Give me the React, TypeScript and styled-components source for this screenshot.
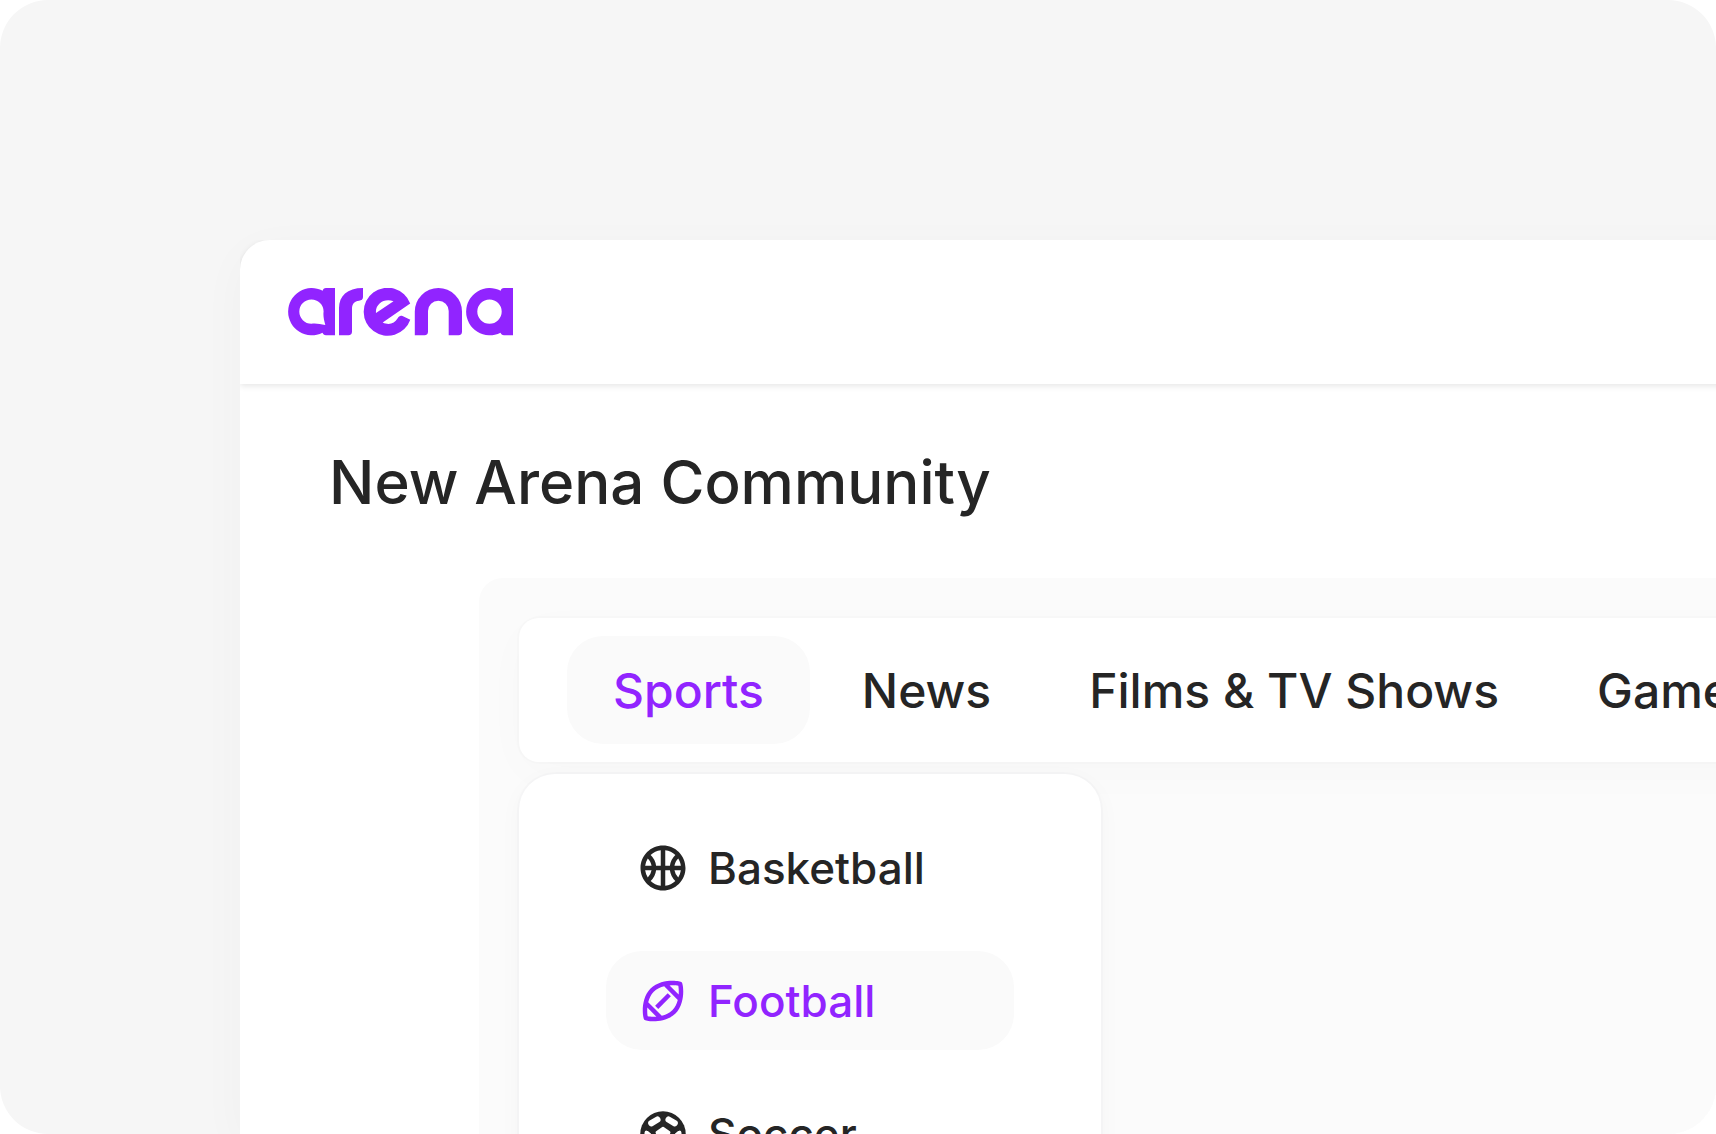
import React from "react";
import styled, { createGlobalStyle } from "styled-components";
import { MdOutlineSportsBasketball, MdOutlineSportsFootball } from "react-icons/md";

const color = {
  accent: "#9124ff",
  text: "#252525",
  canvas: "#f6f6f6",
  panel: "#fbfbfb",
  subtle: "#fafafa",
  white: "#ffffff",
};

const GlobalStyle = createGlobalStyle`
  *, *::before, *::after { box-sizing: border-box; }
  html, body, #root { height: 100%; }
  body {
    margin: 0;
    overflow: hidden;
    background: ${color.white};
    color: ${color.text};
    font-family: Inter, "Liberation Sans", sans-serif;
  }
`;

const Canvas = styled.div`
  display: flex;
  height: 100%;
  padding: 240px 0 0 240px;
  overflow: hidden;
  border-radius: 48px;
  background: ${color.canvas};
`;

const Window = styled.div`
  flex: 1;
  display: flex;
  flex-direction: column;
  min-width: 0;
  margin-right: -60px;
  border-radius: 30px 0 0 0;
  background: ${color.white};
  box-shadow: 0 12px 48px rgba(0, 0, 0, 0.03);
`;

const Header = styled.header`
  display: flex;
  flex: none;
  align-items: center;
  height: 144px;
  padding: 0 48px;
  border-radius: 30px 0 0 0;
  box-shadow: 0 2px 6px rgba(0, 0, 0, 0.1);
  clip-path: inset(0 0 -12px 0);
`;

const HomeLink = styled.a`
  display: flex;
  color: ${color.accent};
`;

const Main = styled.main`
  flex: 1;
  display: flex;
  flex-direction: column;
  min-height: 0;
`;

const Title = styled.h1`
  flex: none;
  margin: 60px 0 58px;
  padding-left: 89px;
  font-size: 60px;
  line-height: 76px;
  font-weight: 500;
  white-space: nowrap;
`;

const Panel = styled.section`
  flex: 1;
  display: flex;
  flex-direction: column;
  align-items: stretch;
  gap: 12px;
  min-height: 0;
  margin-left: 239px;
  padding: 40px 0 0 40px;
  overflow: hidden;
  border-radius: 24px 0 0 0;
  background: ${color.panel};
`;

const TabBar = styled.nav`
  display: flex;
  flex: none;
  align-items: center;
  gap: 6px;
  height: 144px;
  padding-left: 48px;
  border-radius: 20px 0 0 20px;
  background: ${color.white};
  box-shadow: 0 0 0 2px rgba(0, 0, 0, 0.01), 0 12px 48px rgba(0, 0, 0, 0.02);
`;

const Tab = styled.button<{ $active?: boolean }>`
  flex: none;
  height: 108px;
  padding: 0 46px;
  border: 0;
  border-radius: 36px;
  background: ${(p) => (p.$active ? color.subtle : "transparent")};
  color: ${(p) => (p.$active ? color.accent : color.text)};
  font: inherit;
  font-size: 48px;
  font-weight: 500;
  white-space: nowrap;
  cursor: pointer;
`;

const Menu = styled.ul`
  display: flex;
  flex: none;
  flex-direction: column;
  gap: 34px;
  width: 582px;
  margin: 0;
  padding: 44px 87px;
  list-style: none;
  border-radius: 36px;
  background: ${color.white};
  box-shadow: 0 0 0 2px rgba(0, 20, 40, 0.015), 0 6px 24px rgba(0, 0, 0, 0.03);
`;

const MenuItem = styled.button<{ $active?: boolean }>`
  display: flex;
  align-items: center;
  gap: 18px;
  width: 100%;
  height: 99px;
  padding: 0 30px;
  border: 0;
  border-radius: 36px;
  background: ${(p) => (p.$active ? color.subtle : "transparent")};
  color: ${(p) => (p.$active ? color.accent : color.text)};
  font: inherit;
  font-size: 44px;
  font-weight: 500;
  cursor: pointer;

  svg {
    flex: none;
    width: 54px;
    height: 54px;
  }
`;

const ArenaLogo = () => (
  <svg width="226" height="48" viewBox="0 0 226 48" fill="currentColor" fillRule="evenodd" aria-hidden="true">
    <path d="M34.7 2.8C35.2 1 36 0 38 0H47V47.2H38C36 47.2 35.2 46.2 34.5 44.7A23.6 23.6 0 1 1 34.7 2.8ZM23.4 11.5A12.1 12.1 0 1 0 23.4 35.7C28 35 32 36 37.3 37C36 32 35 28 35.6 23.6A12.1 12.1 0 0 0 23.4 11.5Z" />
    <path d="M51 47.2V20C51 8 59 0 75 0V9C75 11.4 73.5 12.5 71 12.7C66.5 13 64 16 64 20.5V43.5C64 46 62.7 47.2 60.5 47.2Z" />
    <path d="M122.2 15.4L94.7 34.5C101 37.5 106.5 35.5 109.5 30.5C111 28 112.5 27.2 114.5 28.1L122.3 31.8A24 24 0 1 1 122.2 15.4ZM88 25L105.5 13.3C97 9.5 87 15.5 88 25Z" />
    <path d="M126.8 47.2V23.6A23.6 23.6 0 0 1 174 23.6V43.5C174 46 172.8 47.2 170.5 47.2H160.7V23A10.35 10.35 0 0 0 140 23V43.5C140 46 138.8 47.2 136.5 47.2Z" />
    <path d="M212.7 2.8C213.2 1 214 0 216 0H225V47.2H216C214 47.2 213.2 46.2 212.5 44.7A23.6 23.6 0 1 1 212.7 2.8ZM201.5 11.4A12.2 12.2 0 1 0 201.5 35.8A12.2 12.2 0 1 0 201.5 11.4Z" />
  </svg>
);

const SoccerIcon = () => (
  <svg viewBox="0 0 24 24" aria-hidden="true">
    <mask id="soccer-panels">
      <rect width="24" height="24" fill="#fff" />
      <g fill="#000" stroke="#000" strokeLinejoin="round" strokeLinecap="round">
        <path d="M12 9.4L14.7 11.3L13.7 14.5H10.3L9.3 11.3Z" strokeWidth="1.2" />
        <path d="M6.8 7.2L9.5 5.6M17.2 7.2L14.5 5.6" strokeWidth="2.8" />
        <path d="M4.7 11.4L5.9 12.4L5.4 14.8L4.5 14.7ZM19.3 11.4L18.1 12.4L18.6 14.8L19.5 14.7Z" strokeWidth="1.8" />
        <path d="M9.6 18.6L10.2 17.3H13.8L14.4 18.6L12 19.2Z" strokeWidth="1.4" />
      </g>
    </mask>
    <circle cx="12" cy="12" r="10.1" fill="currentColor" mask="url(#soccer-panels)" />
  </svg>
);

const tabs = ["Sports", "News", "Films & TV Shows", "Games"];

const sports = [
  { label: "Basketball", icon: <MdOutlineSportsBasketball aria-hidden="true" /> },
  { label: "Football", icon: <MdOutlineSportsFootball aria-hidden="true" /> },
  { label: "Soccer", icon: <SoccerIcon /> },
];

export default function App() {
  const [tab, setTab] = React.useState("Sports");
  const [sport, setSport] = React.useState("Football");

  return (
    <>
      <GlobalStyle />
      <Canvas>
        <Window>
          <Header>
            <HomeLink href="#" aria-label="arena">
              <ArenaLogo />
            </HomeLink>
          </Header>
          <Main>
            <Title>New Arena Community</Title>
            <Panel>
              <TabBar>
                {tabs.map((name) => (
                  <Tab key={name} type="button" $active={name === tab} onClick={() => setTab(name)}>
                    {name}
                  </Tab>
                ))}
              </TabBar>
              <Menu>
                {sports.map(({ label, icon }) => (
                  <li key={label}>
                    <MenuItem type="button" $active={label === sport} onClick={() => setSport(label)}>
                      {icon}
                      {label}
                    </MenuItem>
                  </li>
                ))}
              </Menu>
            </Panel>
          </Main>
        </Window>
      </Canvas>
    </>
  );
}
